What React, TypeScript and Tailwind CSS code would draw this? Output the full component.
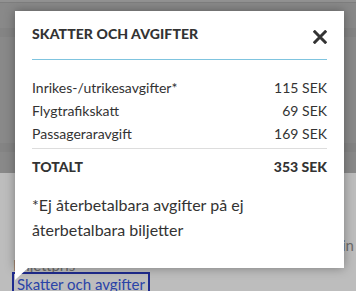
const rows = [
  { label: 'Inrikes-/utrikesavgifter*', value: '115 SEK' },
  { label: 'Flygtrafikskatt', value: '69 SEK' },
  { label: 'Passageraravgift', value: '169 SEK' },
];

export default function App() {
  return (
    <div
      className="relative w-[356px] h-[291px] overflow-hidden bg-[#bdbdbd] text-[#333]"
      style={{ fontFamily: 'Lato, "Liberation Sans", sans-serif' }}
    >
      {/* Dimmed page behind the popover */}
      <div className="flex flex-col h-[173px] bg-[#898989]">
        <div className="h-[2px] bg-[#929292]" />
        <div className="h-px bg-[#7e7e7e]" />
        <div className="h-[25px]" />
        <div className="h-[9px] bg-[#848484]" />
        <div className="h-[106px]" />
        <div className="h-[9px] bg-[#848484]" />
      </div>

      <div className="flex flex-col pl-[13px] pt-[63px] text-[15px] leading-[18px] text-[#6b6b6b]">
        <div className="flex justify-end">
          <span className="mr-[2px]">in</span>
        </div>
        <span className="mt-[2px]">Biljettpris</span>
      </div>

      <div className="absolute left-[12px] top-[272px] px-[3px] border-2 border-[#1f2b8f] text-[15px] leading-[20px] text-[#2a43a8]">
        Skatter och avgifter
      </div>

      {/* Popover */}
      <div className="absolute left-[15px] top-[11px] w-[329px] h-[257px] bg-white shadow-[0_0_10px_rgba(0,0,0,0.35)] px-[17px] pt-[15px]">
        <div className="flex items-start justify-between">
          <h2 className="text-[14px] leading-[16px] font-black tracking-[0.1px] text-[#333]">SKATTER OCH AVGIFTER</h2>
          <svg className="mt-[4px]" width="14" height="14" viewBox="0 0 14 14" fill="none">
            <path d="M1.8 1.8 L12.2 12.2 M12.2 1.8 L1.8 12.2" stroke="#333" strokeWidth="3" strokeLinecap="square" />
          </svg>
        </div>
        <div className="mt-[15px] h-px bg-[#7fc4df]" />

        <div className="flex flex-col pt-[20px] gap-[7px] text-[14px] leading-[16px]">
          {rows.map((r) => (
            <div key={r.label} className="flex justify-between">
              <span>{r.label}</span>
              <span>{r.value}</span>
            </div>
          ))}
        </div>
        <div className="mt-[6px] h-px bg-[#dddddd]" />
        <div className="flex justify-between pt-[10px] text-[14px] leading-[16px] font-black">
          <span>TOTALT</span>
          <span>353 SEK</span>
        </div>
        <p className="mt-[17px] text-[16px] leading-[25px]">
          *Ej återbetalbara avgifter på ej återbetalbara biljetter
        </p>

        {/* Arrow */}
        <div className="absolute left-0 top-full w-0 h-0 border-t-[12px] border-t-white border-r-[13px] border-r-transparent" />
      </div>
    </div>
  );
}
